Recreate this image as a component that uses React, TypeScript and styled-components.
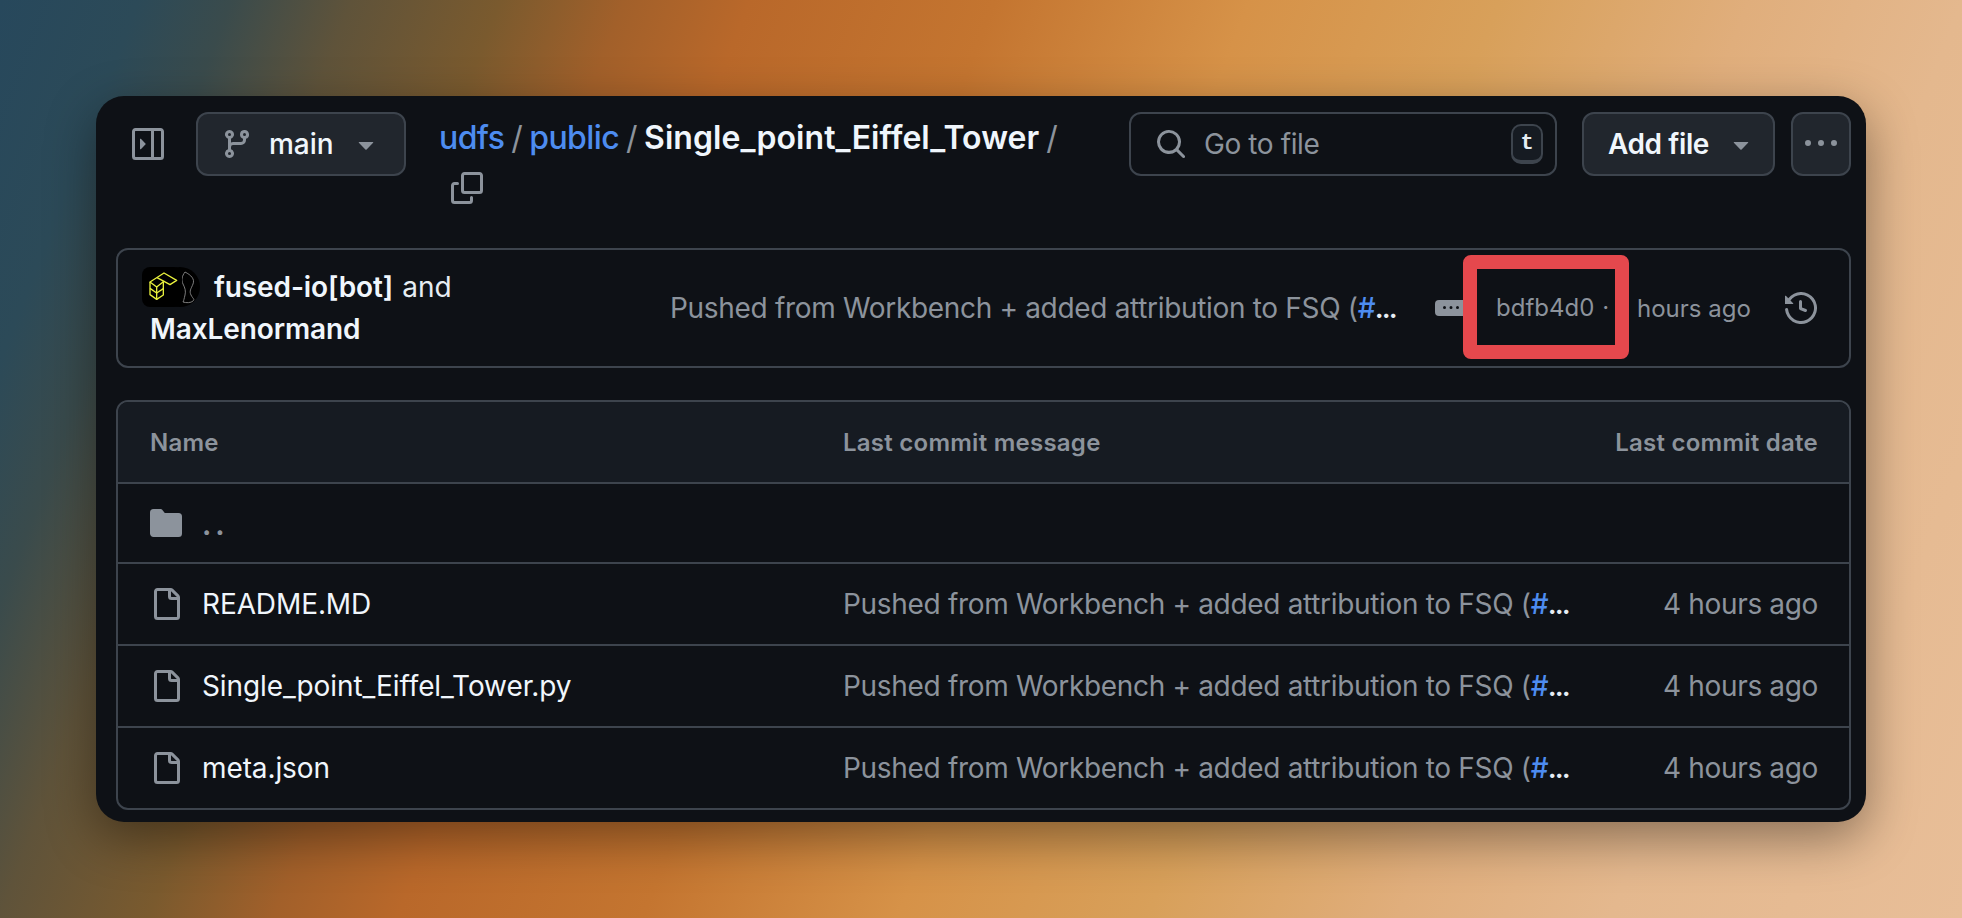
import React from 'react';
import styled, { createGlobalStyle } from 'styled-components';

const GlobalStyle = createGlobalStyle`
    html, body {
        margin: 0;
        padding: 0;
    }
    body {
        font-family: Inter, 'Liberation Sans', sans-serif;
        color: #e6edf3;
        -webkit-font-smoothing: antialiased;
    }
    * {
        box-sizing: border-box;
    }
`;

const Backdrop = styled.div`
    width: 1962px;
    height: 918px;
    overflow: hidden;
    padding: 96px 96px 0;
    background: linear-gradient(
        111deg,
        #27485c 0%,
        #2c4a58 6%,
        #3a4b4c 10%,
        #5f533a 15.2%,
        #7a5a2e 21.6%,
        #a2602a 27%,
        #b9682a 32.4%,
        #c47530 43%,
        #d69248 54%,
        #d8a05a 64.8%,
        #e0ae7c 75.6%,
        #e4b88e 84.8%,
        #e8be98 100%
    );
`;

const Panel = styled.main`
    width: 1770px;
    height: 726px;
    padding: 16px 15px 12px 20px;
    background: #0e1116;
    border-radius: 28px;
    box-shadow: 0 16px 50px rgba(0, 0, 0, 0.4);
`;

const Toolbar = styled.header`
    display: flex;
    align-items: flex-start;
    height: 136px;
    padding-left: 16px;
`;

const SidebarIcon = styled.span`
    display: flex;
    margin-top: 16px;
    margin-right: 32px;
    color: #8c939c;
`;

const Button = styled.div<{ $width: number }>`
    display: flex;
    align-items: center;
    flex: none;
    width: ${props => props.$width}px;
    height: 64px;
    border: 2px solid #3d444d;
    border-radius: 12px;
    background: #21262d;
    color: #f0f6fc;
    font-size: 28px;
    font-weight: 500;
`;

const BranchButton = styled(Button)`
    gap: 16px;
    padding-left: 23px;
    svg:first-child {
        color: #8c939c;
    }
    svg:last-child {
        color: #8c939c;
    }
`;

const AddFileButton = styled(Button)`
    gap: 16px;
    padding-left: 24px;
    font-weight: 600;
    letter-spacing: -0.4px;
    margin-right: 16px;
    svg {
        color: #8c939c;
    }
`;

const MoreButton = styled(Button)`
    justify-content: center;
    color: #8c939c;
`;

const Breadcrumb = styled.nav`
    width: 690px;
    margin-left: 33px;
    font-size: 32px;
    font-weight: 400;
    line-height: 51px;
    color: #8c939c;
    letter-spacing: -0.6px;
`;

const CrumbLink = styled.span`
    color: #4d8cf0;
    font-weight: 500;
`;

const CrumbCurrent = styled.span`
    color: #f0f6fc;
    font-weight: 600;
    letter-spacing: 0.05px;
`;

const Slash = styled.span`
    margin: 0 7px;
`;

const CopyIcon = styled.span`
    display: block;
    height: 51px;
    padding: 9px 0 0 12px;
    color: #8c939c;
`;

const SearchBox = styled.div`
    display: flex;
    align-items: center;
    flex: none;
    width: 428px;
    height: 64px;
    margin-right: 25px;
    padding: 0 12px 0 24px;
    border: 2px solid #3d444d;
    border-radius: 12px;
    color: #8c939c;
    font-size: 28px;
    letter-spacing: -0.4px;
`;

const SearchLabel = styled.span`
    flex: 1;
    margin-left: 17px;
`;

const Key = styled.kbd`
    display: flex;
    align-items: center;
    justify-content: center;
    width: 32px;
    height: 40px;
    border: 2px solid #3d444d;
    border-bottom-width: 4px;
    border-radius: 10px;
    background: #161b22;
    color: #e6edf3;
    font-family: 'Liberation Mono', monospace;
    font-size: 22px;
    font-weight: 700;
`;

const CommitBox = styled.section`
    display: flex;
    align-items: center;
    height: 120px;
    margin-bottom: 32px;
    border: 2px solid #3d444d;
    border-radius: 12px;
    padding-left: 32px;
`;

const Authors = styled.div`
    width: 520px;
    flex: none;
    font-size: 28px;
    line-height: 42px;
    font-weight: 400;
    color: #e6edf3;
`;

const AuthorLine = styled.div`
    display: flex;
    align-items: center;
    height: 42px;
    gap: 9px;
`;

const Avatars = styled.span`
    display: flex;
    margin-left: -8px;
    margin-right: 5px;
`;

const BotAvatar = styled.svg`
    position: relative;
    display: block;
    width: 40px;
    height: 40px;
    border-radius: 8px;
    background: #000;
`;

const UserAvatar = styled.svg`
    display: block;
    width: 40px;
    height: 40px;
    margin-left: -22px;
    border-radius: 50%;
    background: #000;
`;

const AuthorName = styled.strong`
    font-weight: 600;
    color: #f0f6fc;
    letter-spacing: -0.1px;
`;

const CommitMessage = styled.span`
    display: block;
    flex: none;
    width: 726px;
    white-space: nowrap;
    font-size: 28px;
    letter-spacing: -0.32px;
    color: #8c939c;
`;

const Hash = styled.span`
    color: #4d8cf0;
    font-weight: 500;
    letter-spacing: -0.8px;
`;

const Ellipsis = styled.b`
    color: #e6edf3;
    font-weight: 600;
    letter-spacing: -2px;
`;

const ExpandPill = styled.span`
    display: flex;
    align-items: center;
    justify-content: center;
    flex: none;
    width: 32px;
    height: 16px;
    margin-left: 39px;
    border-radius: 4px;
    background: #8c939c;
    color: #0e1116;
`;

const Sha = styled.span`
    flex: none;
    width: 166px;
    height: 104px;
    margin-left: -4px;
    margin-bottom: 2px;
    padding-left: 19px;
    border: 14px solid #e5484d;
    border-radius: 8px;
    color: #8c939c;
    font-size: 24px;
    line-height: 78px;
    white-space: nowrap;
`;

const Dot = styled.span`
    margin-left: 8px;
`;

const TimeAgo = styled.span`
    flex: none;
    margin-left: 8px;
    color: #8c939c;
    font-size: 24px;
`;

const HistoryIcon = styled.span`
    display: flex;
    margin-left: 34px;
    color: #8c939c;
`;

const Table = styled.section`
    border: 2px solid #3d444d;
    border-radius: 12px;
    overflow: hidden;
`;

const Row = styled.div`
    display: grid;
    grid-template-columns: 693px 726px 1fr;
    align-items: center;
    height: 82px;
    padding: 0 31px 0 32px;
    border-top: 2px solid #3d444d;
    font-size: 28px;
    color: #8c939c;
`;

const HeaderRow = styled(Row)`
    height: 80px;
    border-top: 0;
    background: #161b22;
    font-size: 24px;
    font-weight: 600;
    letter-spacing: 0.25px;
`;

const ParentRow = styled(Row)`
    height: 80px;
`;

const NameCell = styled.div`
    display: flex;
    align-items: center;
    gap: 20px;
    color: #f0f6fc;
    letter-spacing: -0.1px;
`;

const ParentDots = styled.span`
    color: #8c939c;
    letter-spacing: 4px;
    font-weight: 700;
    position: relative;
    top: 2px;
`;

const FileGlyph = styled.span`
    display: flex;
    color: #8c939c;
`;

const DateCell = styled.div`
    text-align: right;
    white-space: nowrap;
`;

const RowDate = styled(DateCell)`
    letter-spacing: -0.35px;
`;

type IconProps = { size?: number; children: React.ReactNode };

const Icon = ({ size = 32, children }: IconProps) => (
    <svg width={size} height={size} viewBox="0 0 16 16" fill="currentColor" style={{ flex: 'none', display: 'block' }}>
        {children}
    </svg>
);

const Caret = () => (
    <Icon>
        <path d="m4.427 7.427 3.396 3.396a.25.25 0 0 0 .354 0l3.396-3.396A.25.25 0 0 0 11.396 7H4.604a.25.25 0 0 0-.177.427Z" />
    </Icon>
);

const Kebab = ({ size = 32 }: { size?: number }) => (
    <Icon size={size}>
        <path d="M8 9a1.5 1.5 0 1 0 0-3 1.5 1.5 0 0 0 0 3ZM1.5 9a1.5 1.5 0 1 0 0-3 1.5 1.5 0 0 0 0 3Zm13 0a1.5 1.5 0 1 0 0-3 1.5 1.5 0 0 0 0 3Z" />
    </Icon>
);

const FileIcon = () => (
    <Icon>
        <path d="M2 1.75C2 .784 2.784 0 3.75 0h6.586c.464 0 .909.184 1.237.513l2.914 2.914c.329.328.513.773.513 1.237v9.586A1.75 1.75 0 0 1 13.25 16h-9.5A1.75 1.75 0 0 1 2 14.25Zm1.75-.25a.25.25 0 0 0-.25.25v12.5c0 .138.112.25.25.25h9.5a.25.25 0 0 0 .25-.25V6h-2.75A1.75 1.75 0 0 1 9 4.25V1.5Zm6.75.062V4.25c0 .138.112.25.25.25h2.688l-.011-.013-2.914-2.914-.013-.011Z" />
    </Icon>
);

const files = ['README.MD', 'Single_point_Eiffel_Tower.py', 'meta.json'];

const Message = () => (
    <CommitMessage>
        Pushed from Workbench + added attribution to FSQ (<Hash>#</Hash>
        <Ellipsis>...</Ellipsis>
    </CommitMessage>
);

const App = () => {
    return (
        <Backdrop>
            <GlobalStyle />
            <Panel>
                <Toolbar>
                    <SidebarIcon>
                        <Icon>
                            <path d="M6.823 7.823a.25.25 0 0 1 0 .354l-2.396 2.396A.25.25 0 0 1 4 10.396V5.604a.25.25 0 0 1 .427-.177Z" />
                            <path d="M1.75 0h12.5C15.216 0 16 .784 16 1.75v12.5A1.75 1.75 0 0 1 14.25 16H1.75A1.75 1.75 0 0 1 0 14.25V1.75C0 .784.784 0 1.75 0ZM1.5 1.75v12.5c0 .138.112.25.25.25H9.5v-13H1.75a.25.25 0 0 0-.25.25ZM11 14.5h3.25a.25.25 0 0 0 .25-.25V1.75a.25.25 0 0 0-.25-.25H11Z" />
                        </Icon>
                    </SidebarIcon>
                    <BranchButton $width={210}>
                        <Icon>
                            <path d="M9.5 3.25a2.25 2.25 0 1 1 3 2.122V6A2.5 2.5 0 0 1 10 8.5H6a1 1 0 0 0-1 1v1.128a2.251 2.251 0 1 1-1.5 0V5.372a2.25 2.25 0 1 1 1.5 0v1.836A2.493 2.493 0 0 1 6 7h4a1 1 0 0 0 1-1v-.628A2.25 2.25 0 0 1 9.5 3.25Zm-6 0a.75.75 0 1 0 1.5 0 .75.75 0 0 0-1.5 0Zm8.25-.75a.75.75 0 1 0 0 1.5.75.75 0 0 0 0-1.5ZM4.25 12a.75.75 0 1 0 0 1.5.75.75 0 0 0 0-1.5Z" />
                        </Icon>
                        main
                        <Caret />
                    </BranchButton>
                    <Breadcrumb>
                        <CrumbLink>udfs</CrumbLink>
                        <Slash>/</Slash>
                        <CrumbLink>public</CrumbLink>
                        <Slash>/</Slash>
                        <CrumbCurrent>Single_point_Eiffel_Tower</CrumbCurrent>
                        <Slash>/</Slash>
                        <CopyIcon>
                            <Icon>
                                <path d="M0 6.75C0 5.784.784 5 1.75 5h1.5a.75.75 0 0 1 0 1.5h-1.5a.25.25 0 0 0-.25.25v7.5c0 .138.112.25.25.25h7.5a.25.25 0 0 0 .25-.25v-1.5a.75.75 0 0 1 1.5 0v1.5A1.75 1.75 0 0 1 9.25 16h-7.5A1.75 1.75 0 0 1 0 14.25Z" />
                                <path d="M5 1.75C5 .784 5.784 0 6.75 0h7.5C15.216 0 16 .784 16 1.75v7.5A1.75 1.75 0 0 1 14.25 11h-7.5A1.75 1.75 0 0 1 5 9.25Zm1.75-.25a.25.25 0 0 0-.25.25v7.5c0 .138.112.25.25.25h7.5a.25.25 0 0 0 .25-.25v-7.5a.25.25 0 0 0-.25-.25Z" />
                            </Icon>
                        </CopyIcon>
                    </Breadcrumb>
                    <SearchBox>
                        <Icon>
                            <path d="M10.68 11.74a6 6 0 0 1-7.922-8.982 6 6 0 0 1 8.982 7.922l3.04 3.04a.749.749 0 0 1-.326 1.275.749.749 0 0 1-.734-.215ZM11.5 7a4.499 4.499 0 1 0-8.997 0A4.499 4.499 0 0 0 11.5 7Z" />
                        </Icon>
                        <SearchLabel>Go to file</SearchLabel>
                        <Key>t</Key>
                    </SearchBox>
                    <AddFileButton $width={193}>
                        Add file
                        <Caret />
                    </AddFileButton>
                    <MoreButton $width={60}>
                        <Kebab />
                    </MoreButton>
                </Toolbar>

                <CommitBox>
                    <Authors>
                        <AuthorLine>
                            <Avatars>
                                <BotAvatar viewBox="6 15 120 120">
                                    <g fill="none" stroke="#e8f03c" strokeWidth="4" strokeLinejoin="round">
                                        <path d="M30 60 72 33 110 55 90 68 72 58 50 75Z" />
                                        <path d="M51 47 72 58" />
                                        <path d="M30 60V98L50 112V75" />
                                        <path d="M30 79 50 93" />
                                        <path d="M50 112 70 99V58" />
                                        <path d="M50 93 70 80" />
                                    </g>
                                </BotAvatar>
                                <UserAvatar viewBox="0 0 40 40">
                                    <path d="M25 5C31 8 35 12 33 17S29 24 31 28 35 32 33 34 26 36 23 35M25 5C22 9 21 13 23 17S26 24 25 28 24 33 23 35" fill="none" stroke="#9a9a9a" strokeWidth="0.8" />
                                </UserAvatar>
                            </Avatars>
                            <AuthorName>fused-io[bot]</AuthorName>
                            and
                        </AuthorLine>
                        <AuthorName>MaxLenormand</AuthorName>
                    </Authors>
                    <Message />
                    <ExpandPill>
                        <Kebab size={16} />
                    </ExpandPill>
                    <Sha>
                        bdfb4d0<Dot>·</Dot>
                    </Sha>
                    <TimeAgo>hours ago</TimeAgo>
                    <HistoryIcon>
                        <Icon>
                            <path d="m.427 1.927 1.215 1.215a8.002 8.002 0 1 1-1.6 5.685.75.75 0 1 1 1.493-.154 6.5 6.5 0 1 0 1.18-4.458l1.358 1.358A.25.25 0 0 1 3.896 6H.25A.25.25 0 0 1 0 5.75V2.104a.25.25 0 0 1 .427-.177ZM7.75 4a.75.75 0 0 1 .75.75v2.992l2.028.812a.75.75 0 0 1-.557 1.392l-2.5-1A.751.751 0 0 1 7 8.25v-3.5A.75.75 0 0 1 7.75 4Z" />
                        </Icon>
                    </HistoryIcon>
                </CommitBox>

                <Table>
                    <HeaderRow>
                        <div>Name</div>
                        <div>Last commit message</div>
                        <DateCell>Last commit date</DateCell>
                    </HeaderRow>
                    <ParentRow>
                        <NameCell>
                            <FileGlyph>
                                <Icon>
                                    <path d="M1.75 1A1.75 1.75 0 0 0 0 2.75v10.5C0 14.216.784 15 1.75 15h12.5A1.75 1.75 0 0 0 16 13.25v-8.5A1.75 1.75 0 0 0 14.25 3H7.5a.25.25 0 0 1-.2-.1l-.9-1.2C6.07 1.26 5.55 1 5 1H1.75Z" />
                                </Icon>
                            </FileGlyph>
                            <ParentDots>..</ParentDots>
                        </NameCell>
                    </ParentRow>
                    {files.map(file => (
                        <Row key={file}>
                            <NameCell>
                                <FileGlyph>
                                    <FileIcon />
                                </FileGlyph>
                                {file}
                            </NameCell>
                            <Message />
                            <RowDate>4 hours ago</RowDate>
                        </Row>
                    ))}
                </Table>
            </Panel>
        </Backdrop>
    );
};

export default App;
